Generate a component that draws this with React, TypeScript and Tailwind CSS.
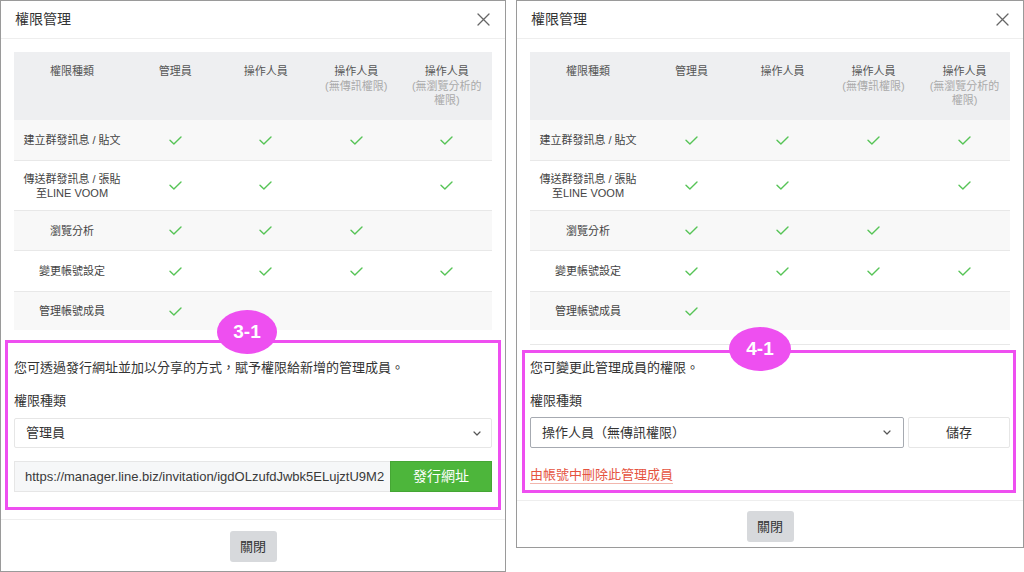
import React from 'react';

const PINK = 'border-[#ee4ff0]';

const rows: { label: React.ReactNode; checks: boolean[]; h: string; bg: string }[] = [
  { label: '建立群發訊息 / 貼文', checks: [true, true, true, true], h: 'h-[40px]', bg: 'bg-[#f8f8f8]' },
  {
    label: (
      <>
        傳送群發訊息 / 張貼
        <br />
        至LINE VOOM
      </>
    ),
    checks: [true, true, false, true],
    h: 'h-[50px]',
    bg: 'bg-white',
  },
  { label: '瀏覽分析', checks: [true, true, true, false], h: 'h-[40px]', bg: 'bg-[#f8f8f8]' },
  { label: '變更帳號設定', checks: [true, true, true, true], h: 'h-[41px]', bg: 'bg-white' },
  { label: '管理帳號成員', checks: [true, false, false, false], h: 'h-[39px]', bg: 'bg-[#f8f8f8]' },
];

function Check() {
  return (
    <svg width="13" height="9" viewBox="0 0 13 9" fill="none">
      <path d="M1 4.2 L4.9 8 L12 1" stroke="#57c457" strokeWidth="1.4" strokeLinecap="round" strokeLinejoin="round" />
    </svg>
  );
}

function CloseIcon() {
  return (
    <svg width="13" height="13" viewBox="0 0 13 13" fill="none">
      <path d="M1 1 L12 12 M12 1 L1 12" stroke="#666" strokeWidth="1.3" strokeLinecap="round" />
    </svg>
  );
}

function Chevron() {
  return (
    <svg width="8" height="5" viewBox="0 0 8 5" fill="none">
      <path d="M1 1 L4 4 L7 1" stroke="#555" strokeWidth="1.2" strokeLinecap="round" strokeLinejoin="round" />
    </svg>
  );
}

function Header({ pr }: { pr: string }) {
  return (
    <div className={`h-[38px] pl-[14px] ${pr} flex items-center justify-between border-b border-[#eeeeee]`}>
      <h2 className="text-[14px] text-[#333]">權限管理</h2>
      <CloseIcon />
    </div>
  );
}

function PermissionTable() {
  return (
    <div className="mt-[13px] px-[13px]">
      <div className="grid grid-cols-[116px_repeat(4,1fr)] bg-[#eeeff1] h-[68px] pt-[12px] text-[11px] leading-[14.5px] text-[#555] text-center">
        <div>權限種類</div>
        <div>管理員</div>
        <div>操作人員</div>
        <div>
          操作人員
          <br />
          <span className="text-[#aaa]">(無傳訊權限)</span>
        </div>
        <div>
          操作人員
          <br />
          <span className="text-[#aaa]">
            (無瀏覽分析的
            <br />
            權限)
          </span>
        </div>
      </div>
      {rows.map((row, i) => (
        <div
          key={i}
          className={`grid grid-cols-[116px_repeat(4,1fr)] items-center ${row.h} ${row.bg} ${i > 0 ? 'border-t border-[#e8e8e8]' : ''} text-[11px] leading-[14px] text-[#444] text-center`}
        >
          <div>{row.label}</div>
          {row.checks.map((c, j) => (
            <div key={j} className="flex justify-center">
              {c && <Check />}
            </div>
          ))}
        </div>
      ))}
    </div>
  );
}

function Badge({ text, cls }: { text: string; cls: string }) {
  return (
    <div
      className={`absolute ${cls} h-[44px] rounded-[50%] bg-[#ee4ff0] flex items-center justify-center text-white text-[19px] font-bold`}
    >
      {text}
    </div>
  );
}

function CloseButton() {
  return (
    <button className="w-[47px] h-[31px] rounded-[3px] bg-[#d7d9dc] text-[13px] text-[#333]">關閉</button>
  );
}

function LeftPanel() {
  return (
    <div className="w-[506px] h-[572px] border border-[#9a9a9a] bg-white flex flex-col shrink-0">
      <Header pr="pr-[15px]" />
      <PermissionTable />
      <div className="relative mt-[10px] mx-[13px] pt-[18px] pb-[18px]">
        <div className={`absolute -left-[9px] -right-[9px] top-0 bottom-0 border-[3px] ${PINK} pointer-events-none`} />
        <Badge text="3-1" cls="left-[203px] -top-[30px] w-[60px]" />
        <p className="text-[13px] leading-[20px] text-[#333]">您可透過發行網址並加以分享的方式，賦予權限給新增的管理成員。</p>
        <p className="mt-[13px] text-[13px] leading-[20px] text-[#333]">權限種類</p>
        <div className="mt-[7px] h-[30px] border border-[#e6e6e6] rounded-[2px] pl-[11px] pr-[10px] flex items-center justify-between text-[13px] text-[#333]">
          <span>管理員</span>
          <Chevron />
        </div>
        <div className="mt-[13px] h-[31px] flex">
          <div className="flex-1 min-w-0 bg-[#f6f7f8] border border-[#e6e6e6] border-r-0 pl-[10px] flex items-center overflow-hidden whitespace-nowrap text-[13px] text-[#3a3a3a]">
            https://manager.line.biz/invitation/igdOLzufdJwbk5ELujztU9M2
          </div>
          <button className="w-[102px] bg-[#4db63b] border border-[#45a634] text-white text-[14px]">發行網址</button>
        </div>
      </div>
      <div className="mt-[9px] border-t border-[#eeeeee] pt-[11px] flex justify-center">
        <CloseButton />
      </div>
    </div>
  );
}

function RightPanel() {
  return (
    <div className="ml-[10px] w-[508px] h-[548px] border border-[#9a9a9a] bg-white flex flex-col shrink-0">
      <Header pr="pr-[14px]" />
      <PermissionTable />
      <div className="mx-[13px] mt-[14px] border-t border-[#e8e8e8]" />
      <div className="relative mt-[5px] mx-[13px] pt-[8px] pb-[7px]">
        <div className={`absolute -left-[8px] -right-[6px] top-0 bottom-0 border-[3px] ${PINK} pointer-events-none`} />
        <Badge text="4-1" cls="left-[199px] -top-[23px] w-[62px]" />
        <p className="text-[13px] leading-[20px] text-[#333]">您可變更此管理成員的權限。</p>
        <p className="mt-[13px] text-[13px] leading-[20px] text-[#333]">權限種類</p>
        <div className="mt-[6px] h-[31px] flex gap-[4px]">
          <div className="w-[374px] border border-[#a6aab1] rounded-[2px] pl-[11px] pr-[12px] flex items-center justify-between text-[13px] text-[#333]">
            <span>操作人員（無傳訊權限）</span>
            <Chevron />
          </div>
          <button className="flex-1 border border-[#e6e6e6] rounded-[2px] bg-white text-[13px] text-[#333]">儲存</button>
        </div>
        <div className="mt-[14px]">
          <span className="inline-block text-[13px] leading-[16px] text-[#e5533f] border-b border-[#f2b6ad]">
            由帳號中刪除此管理成員
          </span>
        </div>
      </div>
      <div className="mt-[7px] border-t border-[#eeeeee] pt-[10px] flex justify-center">
        <CloseButton />
      </div>
    </div>
  );
}

export default function App() {
  return (
    <div className="w-[1024px] h-[572px] bg-white flex items-start overflow-hidden font-['Liberation_Sans','Noto_Sans_CJK_TC',sans-serif]">
      <LeftPanel />
      <RightPanel />
    </div>
  );
}
